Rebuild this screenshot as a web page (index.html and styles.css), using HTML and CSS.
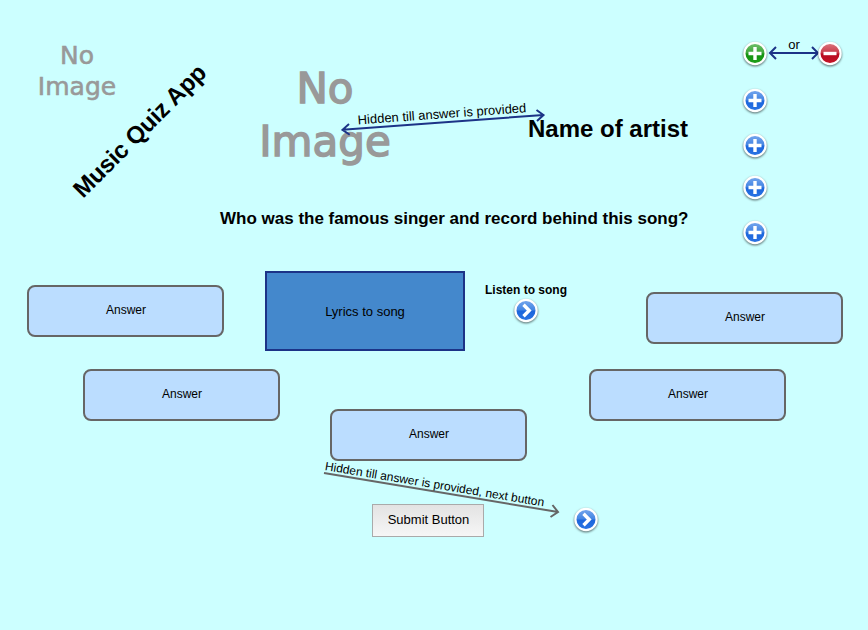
FILE: index.html
```
<!DOCTYPE html>
<html lang="en">
<head>
<meta charset="utf-8">
<title>Music Quiz App</title>
<link rel="stylesheet" href="styles.css">
</head>
<body>
<svg class="defs" width="0" height="0" aria-hidden="true">
  <defs>
    <linearGradient id="blue" x1="0" y1="0" x2="0" y2="1"><stop offset="0" stop-color="#78a8ee"/><stop offset=".48" stop-color="#4384e2"/><stop offset=".52" stop-color="#1c66dc"/><stop offset="1" stop-color="#2b74e4"/></linearGradient>
    <linearGradient id="green" x1="0" y1="0" x2="0" y2="1"><stop offset="0" stop-color="#76c070"/><stop offset=".48" stop-color="#3ba636"/><stop offset=".52" stop-color="#149210"/><stop offset="1" stop-color="#1fa01b"/></linearGradient>
    <linearGradient id="red" x1="0" y1="0" x2="0" y2="1"><stop offset="0" stop-color="#dc7880"/><stop offset=".48" stop-color="#c83a48"/><stop offset=".52" stop-color="#b80c20"/><stop offset="1" stop-color="#c41428"/></linearGradient>
    <symbol id="plus" viewBox="0 0 28 28"><path d="M14 7v13M7.500 13.500h13" stroke="#fff" stroke-width="3.400"/></symbol>
    <symbol id="minus" viewBox="0 0 28 28"><path d="M7.500 13.500h13" stroke="#fff" stroke-width="3.400"/></symbol>
    <symbol id="next" viewBox="0 0 28 28"><path d="M11.500 7.800l5.700 5.700-5.700 5.700" fill="none" stroke="#fff" stroke-width="3.400"/></symbol>
  </defs>
</svg>
<main class="board">
  <header class="top">
    <div class="brand">
      <div class="no-image small">No<br>Image</div>
      <h1 class="title">Music Quiz App</h1>
    </div>
    <section class="artist">
      <div class="artist-row">
        <div class="no-image large">No<br>Image</div>
        <h2 class="artist-name">Name of artist</h2>
      </div>
      <p class="question">Who was the famous singer and record behind this song?</p>
    </section>
    <aside class="rail">
      <div class="choice">
        <svg class="icon" viewBox="0 0 28 28"><circle cx="14" cy="13.500" r="10.600" fill="url(#green)" stroke="#fff" stroke-width="2.200"/><use href="#plus"/></svg>
        <div class="or">
          <span>or</span>
          <svg viewBox="0 0 52 14"><path d="M2 7h48M8 1l-6 6 6 6M44 1l6 6-6 6"/></svg>
        </div>
        <svg class="icon" viewBox="0 0 28 28"><circle cx="14" cy="13.500" r="10.600" fill="url(#red)" stroke="#fff" stroke-width="2.200"/><use href="#minus"/></svg>
      </div>
      <svg class="icon add" viewBox="0 0 28 28"><circle cx="14" cy="13.500" r="10.600" fill="url(#blue)" stroke="#fff" stroke-width="2.200"/><use href="#plus"/></svg>
      <svg class="icon add" viewBox="0 0 28 28"><circle cx="14" cy="13.500" r="10.600" fill="url(#blue)" stroke="#fff" stroke-width="2.200"/><use href="#plus"/></svg>
      <svg class="icon add" viewBox="0 0 28 28"><circle cx="14" cy="13.500" r="10.600" fill="url(#blue)" stroke="#fff" stroke-width="2.200"/><use href="#plus"/></svg>
      <svg class="icon add" viewBox="0 0 28 28"><circle cx="14" cy="13.500" r="10.600" fill="url(#blue)" stroke="#fff" stroke-width="2.200"/><use href="#plus"/></svg>
    </aside>
  </header>
  <section class="play">
    <div class="left">
      <div class="answer">Answer</div>
      <div class="answer inner">Answer</div>
    </div>
    <div class="center">
      <div class="song">
        <div class="lyrics">Lyrics to song</div>
        <div class="listen">
          <b>Listen to song</b>
          <svg class="icon" viewBox="0 0 28 28"><circle cx="14" cy="13.500" r="10.600" fill="url(#blue)" stroke="#fff" stroke-width="2.200"/><use href="#next"/></svg>
        </div>
      </div>
      <div class="answer middle">Answer</div>
      <div class="actions">
        <button class="submit" type="button">Submit Button</button>
        <svg class="icon" viewBox="0 0 28 28"><circle cx="14" cy="13.500" r="10.600" fill="url(#blue)" stroke="#fff" stroke-width="2.200"/><use href="#next"/></svg>
      </div>
    </div>
    <div class="right">
      <div class="answer">Answer</div>
      <div class="answer inner">Answer</div>
    </div>
  </section>
  <svg class="notes" viewBox="0 0 868 630">
    <path class="navy" d="M342.500 129.800L543.500 115M349 124l-6.500 5.800 7.200 5M536.500 110l7 5-6.500 6"/>
    <text x="358" y="124.500" font-size="13" textLength="169" transform="rotate(-4.200 358 124.500)">Hidden till answer is provided</text>
    <path class="gray" d="M324 473L558 512M552.500 505l5.500 7-7.500 5"/>
    <text x="324.500" y="470" font-size="12" textLength="222" transform="rotate(9.450 324.500 470)">Hidden till answer is provided, next button</text>
  </svg>
</main>
</body>
</html>
```
FILE: styles.css
```
* { box-sizing: border-box; }
body { margin: 0; background: #ccffff; color: #000; font-family: "Liberation Sans", Arial, sans-serif; font-size: 12px; }
h1, h2, p { margin: 0; }
.defs { position: absolute; }
.board { position: relative; width: 868px; height: 630px; overflow: hidden; }
.top { display: flex; height: 271px; }
.brand { position: relative; width: 220px; padding: 40px 0 0 37px; }
.no-image { font-family: "DejaVu Sans", sans-serif; color: #999; text-align: center; }
.small { width: 80px; font-size: 25px; line-height: 31px; -webkit-text-stroke: .6px #999; }
.large { width: 132px; font-size: 42px; line-height: 53px; -webkit-text-stroke: 1.5px #999; }
.title { position: absolute; left: 83px; top: 177px; font-size: 24px; line-height: 28px; letter-spacing: -.2px; white-space: nowrap; transform-origin: 0 22px; transform: rotate(-45deg); }
.artist { width: 521px; padding-top: 62px; }
.artist-row { display: flex; padding-left: 39px; }
.artist-name { margin: 53px 0 0 137px; font-size: 24px; line-height: 28px; white-space: nowrap; }
.question { margin-top: 41px; font-size: 17px; line-height: 20px; font-weight: bold; white-space: nowrap; }
.rail { display: flex; flex-direction: column; padding-top: 40px; }
.choice { display: flex; }
.icon { display: block; flex: none; width: 28px; height: 28px; filter: drop-shadow(0 1px 1px rgba(0, 0, 0, .6)); }
.or { display: flex; flex-direction: column; align-items: center; width: 52px; height: 28px; margin: 0 -4px 0 -1px; font-size: 13px; line-height: 14px; }
.or span { margin-top: -2px; }
.or svg { width: 52px; height: 14px; margin-top: -6px; fill: none; stroke: #1c3387; stroke-width: 2; overflow: visible; }
.add { margin-top: 19px; }
.add + .add { margin-top: 17px; }
.add + .add + .add { margin-top: 14px; }
.add + .add + .add + .add { margin-top: 17px; }
.play { display: flex; }
.left { width: 265px; padding: 14px 0 0 27px; }
.left .inner { margin: 32px 0 0 56px; }
.center { width: 324px; }
.right { display: flex; flex-direction: column; width: 254px; padding-top: 21px; align-items: flex-end; }
.right .inner { margin: 25px 57px 0 0; }
.answer { display: flex; align-items: center; justify-content: center; width: 197px; height: 52px; padding: 0 0 2px 1px; background: #bbddff; border: 2px solid #666; border-radius: 8px; }
.song { display: flex; height: 80px; }
.lyrics { display: flex; align-items: center; justify-content: center; width: 200px; height: 80px; background: #4488cc; border: 2px solid #1c3387; font-size: 13px; }
.listen { display: flex; flex-direction: column; align-items: center; margin-left: 20px; padding-top: 12px; line-height: 14px; white-space: nowrap; }
.listen .icon { margin-top: 0; }
.middle { margin: 58px 0 0 65px; }
.actions { display: flex; margin: 43px 0 0 107px; }
.submit { flex: none; width: 112px; height: 33px; padding: 0 0 2px 1px; border: 1px solid #aaa; border-radius: 0; background: linear-gradient(#e3e3e3, #f6f6f6); color: #000; font-family: inherit; font-size: 13px; }
.actions .icon { margin: 2px 0 0 88px; }
.notes { position: absolute; inset: 0; width: 868px; height: 630px; pointer-events: none; }
.notes path { fill: none; stroke-width: 2; }
.navy { stroke: #1c3387; }
.gray { stroke: #666; }
```
